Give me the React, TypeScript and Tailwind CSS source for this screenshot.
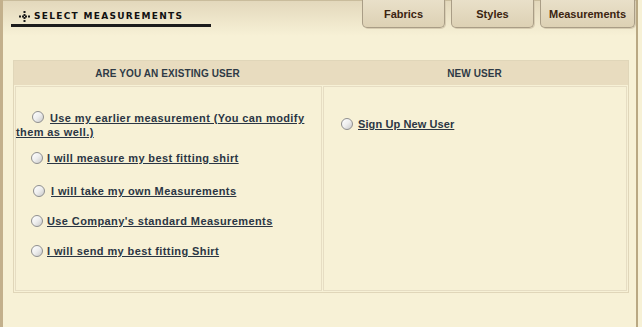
const font = { fontFamily: '"Liberation Sans", Arial, sans-serif' };

function Radio() {
  return (
    <span className="inline-block h-[12px] w-[12px] shrink-0 rounded-full border border-[#8f8f8f] bg-gradient-to-br from-[#ffffff] via-[#eeeeee] to-[#c9c9c9] align-[-1px]" />
  );
}

function MoveIcon() {
  return (
    <svg width="11" height="11" viewBox="0 0 11 11" className="mr-[4px]">
      <g fill="#1a1a1a">
        <rect x="4.5" y="0" width="2" height="2" />
        <rect x="4.5" y="3" width="2" height="2" />
        <rect x="4.5" y="6" width="2" height="2" />
        <rect x="4.5" y="9" width="2" height="2" />
        <rect x="0" y="4.5" width="2" height="2" />
        <rect x="3" y="4.5" width="2" height="2" />
        <rect x="6" y="4.5" width="2" height="2" />
        <rect x="9" y="4.5" width="2" height="2" />
      </g>
    </svg>
  );
}

function Tab({ label, w }: { label: string; w: string }) {
  return (
    <div
      className={`${w} flex h-[28px] items-center justify-center rounded-b-[5px] border-x border-b border-[#a99d86] bg-gradient-to-b from-[#e9e0c9] to-[#ddd1b4] pt-[1px] text-[11px] font-bold text-[#3b2410] shadow-[1px_1px_0_#d8cdb2]`}
    >
      {label}
    </div>
  );
}

function Option({ children, className }: { children: React.ReactNode; className?: string }) {
  return (
    <div className={`flex h-[16px] items-center gap-[4px] ${className ?? ""}`}>
      <Radio />
      <a className="cursor-pointer font-bold tracking-[0.4px] text-[#2b3644] underline">{children}</a>
    </div>
  );
}

export default function App() {
  return (
    <div className="h-[327px] w-[642px] bg-[#f7f1d6]" style={font}>
      <div className="flex h-full w-[638px] border-l-[3px] border-r-[2px] border-l-[#c3b08c] border-r-[#b9a883]">
        <div className="flex w-full flex-col">
          <div className="flex h-[36px] items-start justify-between border-t border-[#c9bc9c] bg-gradient-to-b from-[#e3d8bc] to-[#f7f1d6] pl-[8px] pr-[1px]">
            <div className="mt-[9px] w-[200px] border-b-[3px] border-[#1c1c1c]">
              <div
                className="flex items-center pl-[8px] text-[9px] font-bold tracking-[1.3px] text-[#111]"
                style={{ fontFamily: '"DejaVu Sans", Verdana, sans-serif' }}
              >
                <MoveIcon />
                SELECT MEASUREMENTS
              </div>
            </div>
            <div className="-mt-px flex gap-[6px]">
              <Tab label="Fabrics" w="w-[83px]" />
              <Tab label="Styles" w="w-[83px]" />
              <Tab label="Measurements" w="w-[95px]" />
            </div>
          </div>

          <div className="ml-[10px] mt-[24px] w-[616px] border border-[#e0d6b9] text-[11px]">
            <div className="grid h-[24px] grid-cols-[307px_1fr] bg-[#e8dcbf] text-[10px] font-bold tracking-[0.1px] text-[#2e3a46]">
              <div className="flex items-center justify-center">ARE YOU AN EXISTING USER</div>
              <div className="flex items-center justify-center">NEW USER</div>
            </div>
            <div className="grid h-[207px] grid-cols-[307px_1fr] gap-[1px] p-[1px]">
              <div className="border border-[#e6ddc3] pt-[24px]">
                <div className="leading-[14px] text-[#2b3644]">
                  <span className="ml-[16px] mr-[6px] inline-block">
                    <Radio />
                  </span>
                  <a className="cursor-pointer font-bold tracking-[0.4px] underline">
                    Use my earlier measurement (You can modify them as well.)
                  </a>
                </div>
                <Option className="ml-[15px] mt-[11px]">I will measure my best fitting shirt</Option>
                <Option className="ml-[17px] mt-[17px]">
                  <span className="ml-[2px]">I will take my own Measurements</span>
                </Option>
                <Option className="ml-[15px] mt-[14px]">Use Company's standard Measurements</Option>
                <Option className="ml-[15px] mt-[14px]">I will send my best fitting Shirt</Option>
              </div>
              <div className="border border-[#e6ddc3] pt-[29px]">
                <Option className="ml-[17px] gap-[5px] [&_a]:tracking-[0.1px]">Sign Up New User</Option>
              </div>
            </div>
          </div>
        </div>
      </div>
    </div>
  );
}
